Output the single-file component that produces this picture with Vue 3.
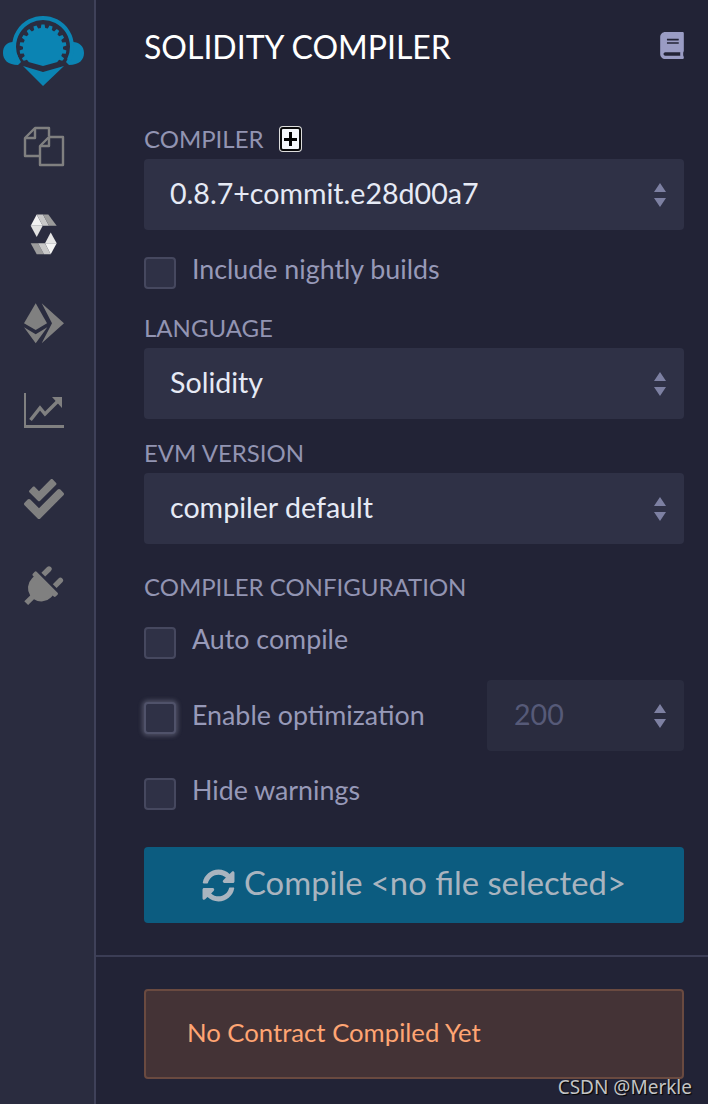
<script setup>
const gear = (() => {
  const cx = 43, cy = 48, teeth = 18
  let d = ''
  for (let i = 0; i < teeth; i++) {
    const a = (i / teeth) * Math.PI * 2
    const w = Math.PI / teeth
    const pts = [[a - w * 0.62, 20], [a - w * 0.4, 23.5], [a + w * 0.4, 23.5], [a + w * 0.62, 20]]
    for (const [t, r] of pts) {
      d += (d ? 'L' : 'M') + (cx + r * Math.sin(t)).toFixed(1) + ' ' + (cy - r * Math.cos(t)).toFixed(1)
    }
  }
  return d + 'Z'
})()
</script>

<template>
  <div class="app">
    <aside class="rail">
      <svg class="rail-art" width="94" height="620" viewBox="0 0 94 620">
        <!-- Remix logo -->
        <g fill="#0b84b3">
          <path d="M13 42C7 42 3 46 3 53C3 60 8 65 18 65L21 62C17 56 15 49 13 42Z" />
          <path d="M73 42C79 42 84 46 84 53C84 60 79 65 69 65L66 62C70 56 72 49 73 42Z" />
          <path d="M17.1 60A29 29 0 1 1 68.9 60" fill="none" stroke="#0b84b3" stroke-width="4" />
          <clipPath id="gear-clip"><path d="M14 16H72V58L43 66L14 58Z" /></clipPath>
          <path :d="gear" clip-path="url(#gear-clip)" />
          <path d="M23 66L43 72L64 66L43 86Z" />
        </g>
        <!-- Files -->
        <g fill="none" stroke="#808080" stroke-width="2.4" stroke-linejoin="round">
          <path d="M40 156H25V138L35 128H49V136" />
          <path d="M35 128V138H25" />
          <path d="M40 165H63V137H49L40 146Z" fill="#2a2c3f" />
          <path d="M49 137V146H40" />
        </g>
        <!-- Solidity -->
        <polygon points="36.7,214.5 30.7,225.7 42.7,225.7" fill="#f2f2f2" />
        <polygon points="30.7,225.7 36.7,237 42.7,225.7" fill="#e2e2e2" />
        <polygon points="36.7,214.5 43,214.5 49,225.7 42.7,225.7" fill="#c8c8c8" />
        <polygon points="43,214.5 48.3,214.5 56.7,225.7 49,225.7" fill="#9c9c9c" />
        <polygon points="50.7,232.5 45,243.3 56.7,243.3" fill="#e6e6e6" />
        <polygon points="45,243.3 50.7,254.3 56.7,243.3" fill="#f4f4f4" />
        <polygon points="30.7,243.3 38,243.3 44,254.3 36.7,254.3" fill="#9c9c9c" />
        <polygon points="38,243.3 45,243.3 50.7,254.3 44,254.3" fill="#c8c8c8" />
        <!-- Deploy -->
        <g fill="#808080">
          <polygon points="35.7,303.3 24,323.3 35.7,330 47,323.3" />
          <polygon points="24,327.3 35.7,334.3 47.3,327.3 35.7,343.3" />
          <polygon points="41.7,303.3 64,323.3 41.7,343.3 52,323.3" />
        </g>
        <!-- Chart -->
        <g fill="#808080">
          <polygon points="24,393 26,393 26,425 64,425 64,428 24,428" />
          <polygon points="52,397 62,397 62,408" />
        </g>
        <polyline points="30.5,420 40,408 45,414 58,401" fill="none" stroke="#808080" stroke-width="3.4" />
        <!-- Checks -->
        <svg x="24" y="479" width="40" height="40" viewBox="0 0 512 512" fill="#808080">
          <path d="M505 174.8l-39.6-39.6c-9.4-9.4-24.6-9.4-33.9 0L192 374.7 80.6 263.2c-9.4-9.4-24.6-9.4-33.9 0L7 302.9c-9.4 9.4-9.4 24.6 0 34L175 505c9.4 9.4 24.6 9.4 33.9 0l296-296.2c9.4-9.5 9.4-24.7.1-34zm-324.3 106c6.2 6.3 16.4 6.3 22.6 0l208-208.2c6.2-6.3 6.2-16.4 0-22.6L366.1 4.7c-6.2-6.3-16.4-6.3-22.6 0L192 156.2l-55.4-55.5c-6.2-6.3-16.4-6.3-22.6 0L68.7 146c-6.2 6.3-6.2 16.4 0 22.6l112 112.2z" />
        </svg>
        <!-- Plug -->
        <g transform="translate(41.4 588) rotate(45) scale(0.084) translate(-192 -256)" fill="#808080">
          <path d="M320,32a32,32,0,0,0-64,0v96h64Zm48,128H16A16,16,0,0,0,0,176v32a16,16,0,0,0,16,16H32v32A160.07,160.07,0,0,0,160,412.8V512h64V412.8A160.07,160.07,0,0,0,352,256V224h16a16,16,0,0,0,16-16V176A16,16,0,0,0,368,160ZM128,32a32,32,0,0,0-64,0v96h64Z" />
        </g>
      </svg>
    </aside>

    <main class="panel">
      <div class="body">
        <header class="head">
          <h1>SOLIDITY COMPILER</h1>
          <svg class="book" width="24" height="27" viewBox="0 0 448 512" fill="#9a9cc4">
            <path d="M448 360V24c0-13.3-10.7-24-24-24H96C43 0 0 43 0 96v320c0 53 43 96 96 96h328c13.3 0 24-10.7 24-24v-16c0-7.5-3.5-14.3-8.9-18.7-4.2-15.4-4.2-59.3 0-74.7 5.4-4.3 8.9-11.1 8.9-18.6zM128 134c0-3.3 2.7-6 6-6h212c3.3 0 6 2.7 6 6v20c0 3.3-2.7 6-6 6H134c-3.3 0-6-2.7-6-6v-20zm0 64c0-3.3 2.7-6 6-6h212c3.3 0 6 2.7 6 6v20c0 3.3-2.7 6-6 6H134c-3.3 0-6-2.7-6-6v-20zm253.4 250H96c-17.7 0-32-14.3-32-32 0-17.6 14.4-32 32-32h285.4c-1.9 17.1-1.9 46.9 0 64z" />
          </svg>
        </header>

        <div class="label label-compiler">COMPILER <span class="plus"></span></div>
        <div class="select">
          <span class="val">0.8.7+commit.e28d00a7</span>
          <svg class="updown" width="14" height="24" viewBox="0 0 14 24"><path d="M7 0L13 9H1ZM7 24L1 15H13Z" /></svg>
        </div>

        <label class="check nightly"><span class="box"></span><span class="txt">Include nightly builds</span></label>

        <div class="label label-language">LANGUAGE</div>
        <div class="select">
          <span class="val">Solidity</span>
          <svg class="updown" width="14" height="24" viewBox="0 0 14 24"><path d="M7 0L13 9H1ZM7 24L1 15H13Z" /></svg>
        </div>

        <div class="label label-evm">EVM VERSION</div>
        <div class="select">
          <span class="val">compiler default</span>
          <svg class="updown" width="14" height="24" viewBox="0 0 14 24"><path d="M7 0L13 9H1ZM7 24L1 15H13Z" /></svg>
        </div>

        <div class="label label-config">COMPILER CONFIGURATION</div>
        <label class="check auto"><span class="box"></span><span class="txt">Auto compile</span></label>
        <div class="opt-row">
          <label class="check opt"><span class="box focus"></span><span class="txt">Enable optimization</span></label>
          <div class="runs">
            <span class="val">200</span>
            <svg class="updown" width="14" height="24" viewBox="0 0 14 24"><path d="M7 0L13 9H1ZM7 24L1 15H13Z" /></svg>
          </div>
        </div>
        <label class="check hide"><span class="box"></span><span class="txt">Hide warnings</span></label>

        <button class="compile">
          <svg width="33" height="33" viewBox="0 0 512 512" fill="#a9b4bf">
            <path d="M370.72 133.28C339.458 104.008 298.888 87.962 255.848 88c-77.458.068-144.328 53.178-162.791 126.85-1.344 5.363-6.122 9.15-11.651 9.15H24.103c-7.498 0-13.194-6.807-11.807-14.176C33.933 94.924 134.813 8 256 8c66.448 0 126.791 26.136 171.315 68.685L463.03 40.97C478.149 25.851 504 36.559 504 57.941V192c0 13.255-10.745 24-24 24H345.941c-21.382 0-32.09-25.851-16.971-40.971l41.75-41.749zM32 296h134.059c21.382 0 32.09 25.851 16.971 40.971l-41.75 41.75c31.262 29.273 71.835 45.319 114.876 45.28 77.418-.07 144.315-53.144 162.787-126.849 1.344-5.363 6.122-9.15 11.651-9.15h57.304c7.498 0 13.194 6.807 11.807 14.176C478.067 417.076 377.187 504 256 504c-66.448 0-126.791-26.136-171.315-68.685L48.97 471.03C33.851 486.149 8 475.441 8 454.059V320c0-13.255 10.745-24 24-24z" />
          </svg>
          <span class="val">Compile &lt;no file selected&gt;</span>
        </button>
      </div>

      <div class="foot">
        <div class="alert"><span class="val">No Contract Compiled Yet</span></div>
      </div>
      <div class="mark">CSDN @Merkle</div>
    </main>
  </div>
</template>

<style>
html, body { margin: 0; background: #222336; }
</style>

<style scoped>
.app {
  display: flex;
  width: 708px;
  height: 1104px;
  overflow: hidden;
  background: #222336;
  font-family: "Lato", "Noto Sans", sans-serif;
  font-size: 26.8px;
}
.rail {
  width: 94px;
  flex: none;
  background: #2a2c3f;
  border-right: 2px solid #3f4159;
}
.rail-art { display: block; }
.panel {
  position: relative;
  flex: 1;
  min-width: 0;
}
.body {
  padding: 0 24px 0 48px;
  box-sizing: border-box;
  border-bottom: 2px solid #3b3d55;
  height: 957px;
}
.head {
  height: 96px;
  display: flex;
  justify-content: space-between;
  align-items: center;
}
.head h1 {
  margin: 0 0 3px;
  font-size: 32px;
  font-weight: 400;
  color: #fff;
  white-space: nowrap;
}
.book { display: block; margin-top: -5px; }
.label {
  color: #9294b2;
  line-height: 30px;
  white-space: nowrap;
  font-size: 24px;
}
.label-compiler {
  margin-top: 28px;
  margin-bottom: 5px;
  display: flex;
  align-items: center;
  gap: 16px;
}
.label-language { margin-top: 24px; margin-bottom: 5px; }
.label-evm { margin-top: 19px; margin-bottom: 5px; }
.label-config { margin-top: 28px; margin-bottom: 25px; }
.plus {
  position: relative;
  display: block;
  width: 17px;
  height: 20px;
  background: #f4f6fa;
  border: 2px solid #0a0a0a;
  border-radius: 3px;
  box-shadow: 0 0 0 1px #ddd;
}
.plus::before, .plus::after {
  content: "";
  position: absolute;
  background: #000;
}
.plus::before { left: 2px; right: 2px; top: 8.5px; height: 3px; }
.plus::after { top: 3px; bottom: 3px; left: 7px; width: 3px; }
.select, .runs {
  display: flex;
  align-items: center;
  justify-content: space-between;
  height: 71px;
  box-sizing: border-box;
  border-radius: 4px;
  background: #2f3146;
  color: #e6eaf5;
  padding: 0 17px 0 26px;
  font-size: 28.6px;
}
.val { display: block; line-height: 34px; margin-bottom: 4px; }
.updown { display: block; fill: #7d80a2; }
.check {
  display: flex;
  align-items: center;
  gap: 16px;
  color: #9799b8;
  white-space: nowrap;
}
.txt { display: block; line-height: 24px; margin-bottom: 8px; }
.box {
  display: block;
  flex: none;
  width: 32px;
  height: 32px;
  box-sizing: border-box;
  background: #2f3146;
  border: 2px solid #46485f;
  border-radius: 4px;
}
.box.focus {
  border-color: #50526a;
  box-shadow: 0 0 4px 2px #8c8fa666;
}
.opt .box { margin-top: 4px; }
.opt .txt { margin-bottom: 2px; }
.nightly { margin-top: 27px; }
.auto { margin-bottom: 21px; }
.opt-row {
  display: flex;
  align-items: center;
  justify-content: space-between;
}
.runs {
  width: 197px;
  background: #2a2c3f;
  color: #565a78;
  padding-left: 27px;
}
.hide { margin-top: 27px; }
.compile {
  display: flex;
  align-items: center;
  justify-content: center;
  gap: 9px;
  width: 100%;
  height: 76px;
  margin-top: 37px;
  border: 0;
  border-radius: 4px;
  background: #0c5c80;
  color: #a9b4bf;
  font: inherit;
  font-size: 32.8px;
}
.foot { padding: 32px 24px 0 48px; }
.alert {
  height: 90px;
  box-sizing: border-box;
  display: flex;
  align-items: center;
  padding-left: 41px;
  background: #443336;
  border: 2px solid #6a4a40;
  border-radius: 4px;
  color: #ffa573;
  font-size: 25.7px;
}
.mark {
  position: absolute;
  right: 16px;
  bottom: 4px;
  font-family: "Noto Sans", sans-serif;
  font-size: 19px;
  color: #c4c4c4;
  text-shadow: 1px 1px 1px #000;
}
</style>
